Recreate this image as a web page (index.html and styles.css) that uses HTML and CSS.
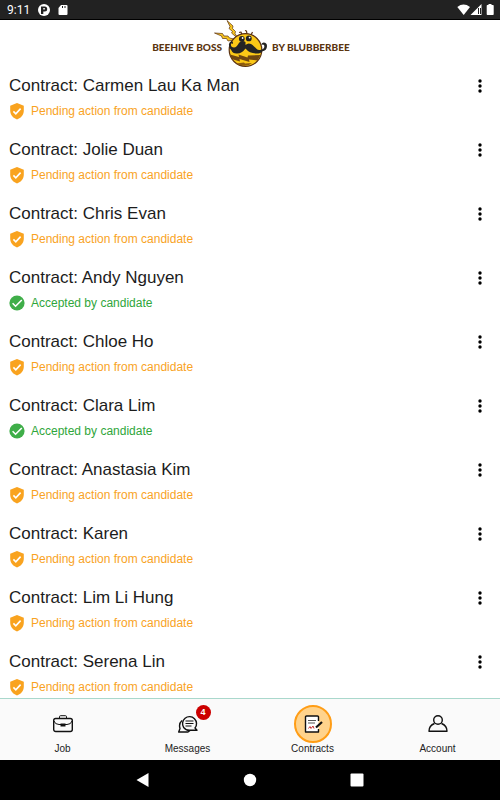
FILE: index.html
```html
<!DOCTYPE html>
<html lang="en">
<head>
<meta charset="utf-8">
<meta name="viewport" content="width=device-width, initial-scale=1">
<title>Contracts</title>
<link rel="stylesheet" href="styles.css">
</head>
<body>
<svg class="defs" aria-hidden="true">
  <symbol id="shield" viewBox="2 1 20 22"><path fill="#f9a31f" d="M12 2 3.500 5.500v6c0 5.500 3.500 9.500 8.500 11 5-1.500 8.500-5.500 8.500-11v-6z"/><path fill="none" stroke="#fff" stroke-width="2" d="m7.500 12.500 3 3L16.500 9"/></symbol>
  <symbol id="check" viewBox="2 1 20 22"><circle cx="12" cy="12" r="9.500" fill="#3fae49"/><path fill="none" stroke="#fff" stroke-width="2" d="m6.500 12.300 3.700 3.700L18 8.200"/></symbol>
  <symbol id="dots" viewBox="0 0 6 16"><circle cx="3" cy="3" r="1.700"/><circle cx="3" cy="8" r="1.700"/><circle cx="3" cy="13" r="1.700"/></symbol>
</svg>
<div class="screen">
  <div class="status-bar">
    <span class="clock">9:11</span>
    <svg width="12" height="12" viewBox="0 0 12 12"><circle cx="6" cy="6" r="6" fill="#fff"/><path fill="#222" d="M3 2.500h3.700a2.500 2.500 0 0 1 0 5H5.300V10H3z"/><path fill="#fff" d="M5.300 4h1.500v1.500H5.300z"/></svg>
    <svg width="10" height="12" viewBox="0 0 10 12"><path fill="#fff" d="M3 1h5.500q1 0 1 1v8q0 1-1 1H1.500q-1 0-1-1V4z"/><path stroke="#222" d="M4.500 2v2M7 2v2"/></svg>
    <span class="spacer"></span>
    <svg width="38" height="14" viewBox="0 0 38 14"><path fill="#fff" d="M.3 4Q6.500-.8 13 4L6.700 12z"/><path fill="#fff" d="M24.500 1v11h-11z"/><path stroke="#222" stroke-width="1" d="M21.500 5v6M23.500 5v6"/><path fill="#fff" d="M31.500 1h3v1H36q.7 0 .7.700v8.600q0 .7-.7.700h-5.600q-.7 0-.7-.7V2.700q0-.7.700-.7h1.100z"/></svg>
  </div>
  <header class="brand">
    <span class="brand-left">BEEHIVE BOSS</span>
    <svg class="bee" width="54" height="48" viewBox="0 0 54 48">
      <g stroke="#5b3213" stroke-width=".7" stroke-linejoin="round">
        <path fill="#f7c51e" d="M13 .5 19 6l-.5 2.500 3 3-.5 2 3 5-6.500-5.500 1-1.500-3.500-3 1-2z"/>
        <path fill="#f7c51e" d="m.5 13 8 .5 1.500 2.500 4 0 1.500 2 7 1.500-8.500 1.500-1.500-2.500-4 0-1-2.500z"/>
        <path fill="none" stroke-width="1.200" d="m28 15-1-3-2 .5M33 14.500l-.5-3.500-1.500-.5M37 15l1.500-3"/>
        <circle cx="31.500" cy="30" r="16.300" fill="#fbc817" stroke-width="1.200"/>
      </g>
      <path fill="#704711" d="M16 34.500 25 37l-.5-2.500 9 3 .5-2 12.500-.5-3 5.500-8.500-1 .5 2.500-10-3 .5 2.500L17.500 39z"/>
      <path fill="#8c5a10" d="m22 43.500 8-1 1 1 7-.5q-3 3-8 2.800-5-.3-8-2.300"/>
      <circle cx="27.800" cy="18.800" r="2.900" fill="#222"/><circle cx="34.800" cy="18.400" r="2.900" fill="#222"/>
      <circle cx="28.600" cy="18" r=".9" fill="#fff"/><circle cx="35.600" cy="17.600" r=".9" fill="#fff"/>
      <path fill="#242424" d="M31.500 25Q34 22.500 37 24c4 2 5 6.500 9 6 4-.5 5-3 4-5q-1.500-1-2.500.5-.5-2.500 2-3 3.500 0 3.500 3.500 0 4.500-5 5.500-1 2-5.500 2-7 0-11-5-4 5.500-9 5-4 0-5-3-3-3-2.500-6.500.5-3 3-2.500 1.500.7.800 2.500-1.500-1.500-2 .5.200 3 3.200 3c4 0 4-6 8-6.500q2-.2 3.500 1"/>
    </svg>
    <span class="brand-right">BY BLUBBERBEE</span>
  </header>
  <main class="contracts">
    <article class="contract"><h2>Contract: Carmen Lau Ka Man</h2><button class="more" aria-label="More"><svg><use href="#dots"/></svg></button><p class="pending"><svg><use href="#shield"/></svg>Pending action from candidate</p></article>
    <article class="contract"><h2>Contract: Jolie Duan</h2><button class="more" aria-label="More"><svg><use href="#dots"/></svg></button><p class="pending"><svg><use href="#shield"/></svg>Pending action from candidate</p></article>
    <article class="contract"><h2>Contract: Chris Evan</h2><button class="more" aria-label="More"><svg><use href="#dots"/></svg></button><p class="pending"><svg><use href="#shield"/></svg>Pending action from candidate</p></article>
    <article class="contract"><h2>Contract: Andy Nguyen</h2><button class="more" aria-label="More"><svg><use href="#dots"/></svg></button><p class="accepted"><svg><use href="#check"/></svg>Accepted by candidate</p></article>
    <article class="contract"><h2>Contract: Chloe Ho</h2><button class="more" aria-label="More"><svg><use href="#dots"/></svg></button><p class="pending"><svg><use href="#shield"/></svg>Pending action from candidate</p></article>
    <article class="contract"><h2>Contract: Clara Lim</h2><button class="more" aria-label="More"><svg><use href="#dots"/></svg></button><p class="accepted"><svg><use href="#check"/></svg>Accepted by candidate</p></article>
    <article class="contract"><h2>Contract: Anastasia Kim</h2><button class="more" aria-label="More"><svg><use href="#dots"/></svg></button><p class="pending"><svg><use href="#shield"/></svg>Pending action from candidate</p></article>
    <article class="contract"><h2>Contract: Karen</h2><button class="more" aria-label="More"><svg><use href="#dots"/></svg></button><p class="pending"><svg><use href="#shield"/></svg>Pending action from candidate</p></article>
    <article class="contract"><h2>Contract: Lim Li Hung</h2><button class="more" aria-label="More"><svg><use href="#dots"/></svg></button><p class="pending"><svg><use href="#shield"/></svg>Pending action from candidate</p></article>
    <article class="contract"><h2>Contract: Serena Lin</h2><button class="more" aria-label="More"><svg><use href="#dots"/></svg></button><p class="pending"><svg><use href="#shield"/></svg>Pending action from candidate</p></article>
  </main>
  <nav class="tabs">
    <a href="#job"><span class="tab-icon"><svg width="20" height="20" viewBox="0 0 20 20"><rect x=".7" y="4.500" width="18.600" height="13" rx="2"/><path stroke-width="1" d="M6.500 4V2.700q0-1 1-1h5q1 0 1 1V4M1 7q1 3.500 5 3.500h8q4 0 5-3.500"/><path fill="#111" stroke="none" d="M7.500 9.500h5v3h-5z"/></svg></span>Job</a>
    <a href="#messages"><span class="tab-icon"><svg width="20" height="20" viewBox="0 0 20 20"><path d="M5.700 13.500A7 7 0 1 1 17 14l2 2.300h-7.500a7 7 0 0 1-5.800-2.800z"/><path d="M4 6.500q-3.500 3-2 8L.7 18H10l2-1.500"/><path stroke-width="1" d="M7.500 7h8M7.500 9.500h8M7.500 12h6"/></svg><span class="badge">4</span></span>Messages</a>
    <a href="#contracts" aria-current="page"><span class="tab-icon active"><svg width="20" height="20" viewBox="0 0 20 20"><path fill="#fff" d="M15.500 7V3q0-1-1-1h-11q-1 0-1 1v15h13v-3"/><path stroke="#555" stroke-width="1.200" d="M5 6.500h8M5 9h7"/><path stroke="#c83232" stroke-width="1" d="m5.500 14.500 1.500-2 1 2 2-2.500 1 2.500"/><path stroke-width="2.200" d="m13 13.500 6-5.500"/></svg></span>Contracts</a>
    <a href="#account"><span class="tab-icon"><svg width="20" height="20" viewBox="0 0 20 20"><circle cx="10" cy="6" r="4.300"/><path d="M6.500 9.500Q1 11.500 1 17.300h18q0-5.800-5.500-7.800"/></svg></span>Account</a>
  </nav>
  <footer class="system-nav">
    <button aria-label="Back"><svg width="14" height="14" viewBox="0 0 14 14"><path d="M12.500 0v14L.5 7z"/></svg></button>
    <button aria-label="Home"><svg width="14" height="14" viewBox="0 0 14 14"><circle cx="7" cy="7" r="6.200"/></svg></button>
    <button aria-label="Recent apps"><svg width="14" height="14" viewBox="0 0 14 14"><rect x=".5" y=".5" width="13" height="13" rx="1"/></svg></button>
  </footer>
</div>
</body>
</html>
```
FILE: styles.css
```css
* { box-sizing: border-box; }
body { margin: 0; background: #fff; color: #1c1c1c; font-family: "Liberation Sans", Arial, sans-serif; }
button { padding: 0; border: 0; background: none; cursor: pointer; }
svg { display: block; flex: none; }
.defs { position: absolute; width: 0; height: 0; }
.screen { display: flex; flex-direction: column; height: 100vh; }
.status-bar { display: flex; flex: none; align-items: center; gap: 8px; height: 20px; padding: 0 5px 0 7px; border-bottom: 1px solid #000; background: #222; color: #fff; font: 12px/20px Roboto, sans-serif; }
.spacer { flex: 1; }
.brand { display: grid; flex: none; grid-template-columns: 1fr 46px 1fr; align-items: center; height: 50px; padding-right: 10px; color: #5b3510; font: 900 10px/12px Lato, sans-serif; }
.brand-left { padding-top: 4px; text-align: right; }
.brand-right { padding: 4px 0 0 4px; }
.bee { align-self: start; justify-self: end; }
.contracts { flex: 1; min-height: 0; overflow: hidden; }
.contract { display: grid; grid-template-columns: 1fr 24px; align-content: start; height: 64px; padding: 4px 8px 0 9px; }
.contract h2 { margin: 0; font-size: 17px; font-weight: 400; line-height: 24px; }
.more { display: grid; place-items: center; }
.more svg { width: 6px; height: 16px; }
.contract p { display: flex; align-items: center; gap: 6px; margin: 4px 0 0; font-size: 12px; line-height: 18px; }
.contract p svg { width: 16px; height: 18px; }
.pending { color: #f9a31f; }
.accepted { color: #2fa63b; }
.tabs { display: grid; flex: none; grid-template-columns: repeat(4, 1fr); height: 62px; padding-top: 6px; border-top: 1px solid #a9d8cc; background: #fafafa; }
.tabs a { display: flex; flex-direction: column; align-items: center; color: #222; font-size: 10px; line-height: 12px; text-decoration: none; }
.tab-icon { position: relative; display: grid; place-items: center; width: 38px; height: 38px; border-radius: 50%; }
.tab-icon svg { fill: none; stroke: #111; stroke-width: 1.4; stroke-linejoin: round; }
.active { border: 2px solid #ff9d16; background: #ffd38c; }
.badge { position: absolute; top: 0; right: -4px; width: 15px; height: 15px; border-radius: 50%; background: #c00; color: #fff; font-size: 9px; font-weight: 700; line-height: 15px; text-align: center; }
.system-nav { display: flex; flex: none; align-items: center; justify-content: center; gap: 93px; height: 40px; background: #000; }
.system-nav svg { fill: #fff; }
```
